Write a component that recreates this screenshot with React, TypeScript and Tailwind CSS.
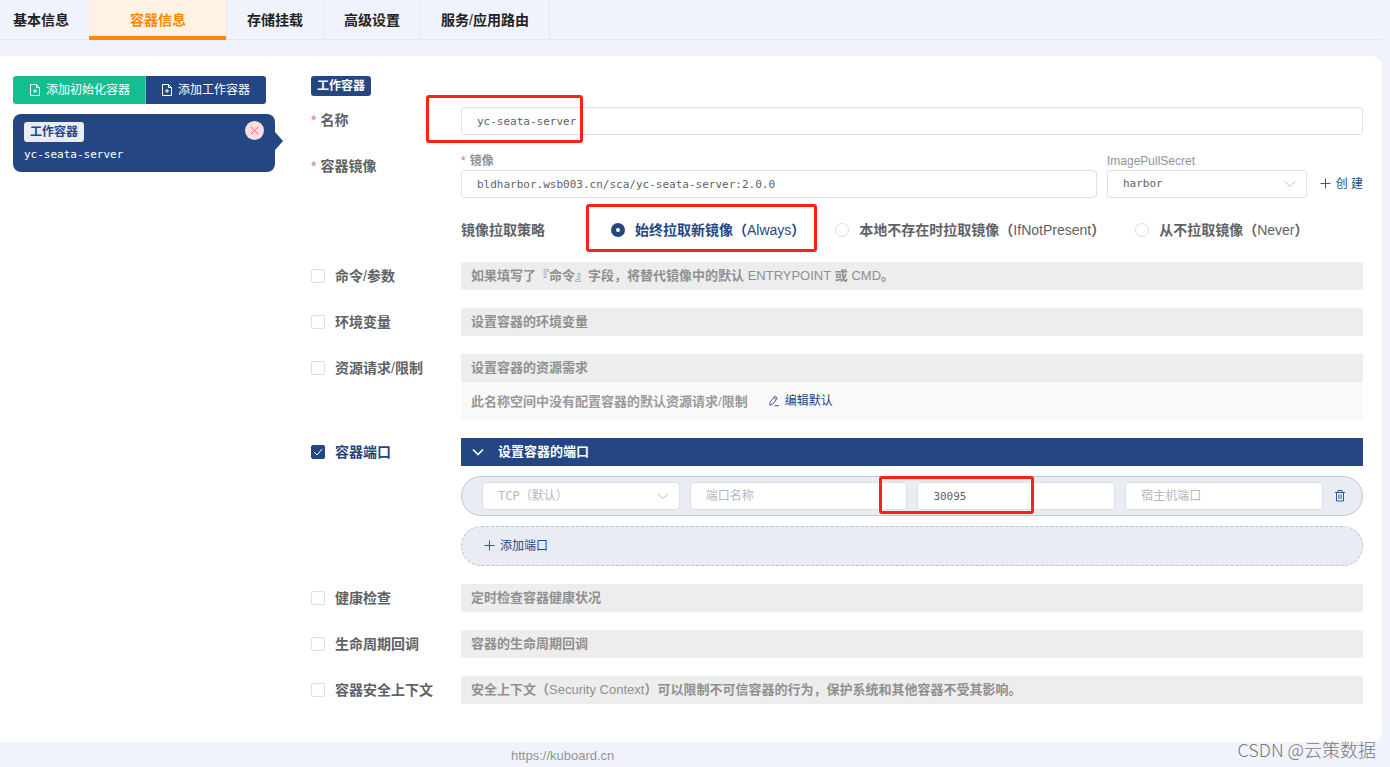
import { useState, type ReactNode } from 'react';
import clsx from 'clsx';

const sans = "font-['Liberation_Sans','Noto_Sans_CJK_SC',sans-serif]";
const mono = "font-['DejaVu_Sans_Mono','Noto_Sans_CJK_SC',monospace]";

const inputClass = `h-7 w-full min-w-0 rounded border border-[#dcdfe6] bg-white px-[15px] text-[11px] text-[#606266] outline-none placeholder:font-['Liberation_Sans','Noto_Sans_CJK_SC',sans-serif] placeholder:text-xs placeholder:text-[#b4b8bf] ${mono}`;

const tabs = ['基本信息', '容器信息', '存储挂载', '高级设置'];

const policies = [
  { value: 'Always', label: '始终拉取新镜像' },
  { value: 'IfNotPresent', label: '本地不存在时拉取镜像' },
  { value: 'Never', label: '从不拉取镜像' },
];

function Thin({ children }: { children: ReactNode }) {
  return <span className="font-normal">{children}</span>;
}

function DocumentAddIcon() {
  return (
    <svg viewBox="0 0 12 12" className="h-3 w-3" fill="none" stroke="currentColor" aria-hidden="true">
      <path d="M1.5.5h6l3 3v8h-9zM7.5.5v3h3M6 5v4M4 7h4" />
    </svg>
  );
}

function PlusIcon() {
  return (
    <svg viewBox="0 0 12 12" className="h-3 w-3" fill="none" stroke="currentColor" strokeWidth="0.9" aria-hidden="true">
      <path d="M5.5 .5v10M.5 5.5h10" />
    </svg>
  );
}

function EditIcon() {
  return (
    <svg viewBox="0 0 12 12" className="h-3 w-3" fill="none" stroke="currentColor" strokeWidth="0.9" strokeLinejoin="round" aria-hidden="true">
      <path d="M2 7.2 6.8 1.2 9.3 3.2 4.6 9.2 1.8 10.2zM5.8 2.6l2.4 2M6.5 10.7h4.5" />
    </svg>
  );
}

function TrashIcon() {
  return (
    <svg viewBox="0 0 12 12" className="h-3 w-3" fill="none" stroke="currentColor" strokeWidth="0.9" aria-hidden="true">
      <path d="M1 2.5h10M4 2.5v-2h4v2M2.5 2.5v8.5h7v-8.5M4.9 4.5v4.5M7.1 4.5v4.5" />
    </svg>
  );
}

function ChevronDown({ className }: { className?: string }) {
  return (
    <svg viewBox="0 0 12 12" className={clsx('h-3 w-3', className)} fill="none" stroke="currentColor" aria-hidden="true">
      <path d="M1 3.5l5 5 5-5" />
    </svg>
  );
}

function Mark({ className }: { className: string }) {
  return <span className={clsx('pointer-events-none absolute z-10 rounded-[3px] border-[3px] border-[#ff2116]', className)} />;
}

function Select({ id, label, options, className }: { id: string; label: string; options: string[]; className?: string }) {
  return (
    <div className="relative">
      <select
        id={id}
        aria-label={label}
        className={clsx('h-7 w-full appearance-none rounded border border-[#dcdfe6] bg-white px-[15px] outline-none', mono, className)}
      >
        {options.map((o) => (
          <option key={o}>{o}</option>
        ))}
      </select>
      <ChevronDown className="pointer-events-none absolute top-2 right-[11px] text-[#b4b8bf]" />
    </div>
  );
}

function RequiredRow({ label, htmlFor, children }: { label: string; htmlFor: string; children: ReactNode }) {
  return (
    <div className="grid grid-cols-[150px_minmax(0,1fr)]">
      <label htmlFor={htmlFor} className="flex h-7 gap-1 text-sm leading-[26px] font-bold text-[#606266]">
        <span className="font-normal text-[#f56c6c]">*</span>
        {label}
      </label>
      {children}
    </div>
  );
}

interface ToggleRowProps {
  id: string;
  label: ReactNode;
  hint: ReactNode;
  defaultChecked?: boolean;
  children?: ReactNode;
}

function ToggleRow({ id, label, hint, defaultChecked = false, children }: ToggleRowProps) {
  const [checked, setChecked] = useState(defaultChecked);

  return (
    <div className="grid grid-cols-[150px_minmax(0,1fr)]">
      <div className="flex h-7 items-center gap-2.5">
        <div className="relative flex h-3.5 w-3.5">
          <input
            id={id}
            type="checkbox"
            checked={checked}
            onChange={(e) => setChecked(e.target.checked)}
            className="peer h-3.5 w-3.5 appearance-none rounded-xs border border-[#dcdfe6] bg-white checked:border-[#244783] checked:bg-[#244783]"
          />
          <svg viewBox="0 0 14 14" className="pointer-events-none absolute inset-0 hidden text-white peer-checked:block" fill="none" stroke="currentColor" aria-hidden="true">
            <path d="M3 7l3 3 5-6" />
          </svg>
        </div>
        <label htmlFor={id} className={clsx('text-sm leading-7 font-bold', checked ? 'text-[#244783]' : 'text-[#606266]')}>
          {label}
        </label>
      </div>
      <div>
        {checked ? (
          <div className="flex h-7 items-center gap-3.5 bg-[#244783] pl-[11px] text-[13px] leading-7 font-bold text-white">
            <ChevronDown className="stroke-[1.6]" />
            {hint}
          </div>
        ) : (
          <div className="h-7 bg-[#ededed] pl-2.5 text-[13px] leading-7 font-bold text-[#909090]">{hint}</div>
        )}
        {children}
      </div>
    </div>
  );
}

export default function App() {
  const [policy, setPolicy] = useState('Always');

  return (
    <div className={`relative min-h-screen bg-[#f0f3fb] ${sans}`}>
      {/* Tabs */}
      <nav className="mr-[7px] flex h-10 border-b border-[#e4e7ed] text-sm font-bold text-[#222222]">
        {tabs.map((tab, i) => (
          <button
            key={tab}
            type="button"
            className={clsx(
              'h-10',
              i === 0 && 'pr-5 pl-[13px]',
              i === 1 && 'border-b-4 border-[#ff8800] bg-[#fff2e4] pt-1 pr-10 pl-[41px] text-[#ff8800]',
              i > 1 && 'border-b border-l border-[#e4e7ed] px-5',
            )}
          >
            {tab}
          </button>
        ))}
        <button type="button" className="h-10 border-x border-b border-[#e4e7ed] px-5">
          服务<Thin>/</Thin>应用路由
        </button>
      </nav>

      <main className="mt-[15px] mr-[7px] flex rounded-r-[10px] border border-l-0 border-[#ebeef5] bg-white pt-5 pr-[19px] pb-[38px] pl-[13px]">
        {/* Container list */}
        <aside className="mr-7 w-[270px] shrink-0">
          <div className="flex text-xs text-white">
            <button type="button" className="flex h-7 items-center gap-[5px] rounded-l-[3px] border-r border-[#8fa5bd] bg-[#13bf91] pr-[15px] pl-4">
              <DocumentAddIcon />
              添加初始化容器
            </button>
            <button type="button" className="flex h-7 items-center gap-[5px] rounded-r-[3px] bg-[#244783] pr-4 pl-[15px]">
              <DocumentAddIcon />
              添加工作容器
            </button>
          </div>
          <div className="relative mt-2.5 mr-2 h-[58px] rounded-lg bg-[#244783] px-[11px] pt-2">
            <span className="block h-5 w-[60px] rounded-[3px] bg-[#e9ecf3] text-center text-xs leading-5 font-bold text-[#244783]">工作容器</span>
            <div className={`mt-1 text-[11px] leading-[18px] text-white ${mono}`}>yc-seata-server</div>
            <button type="button" aria-label="删除" className="absolute top-[7px] right-[11px] flex h-[19px] w-[19px] items-center justify-center rounded-full bg-[#fcdcdc] text-[#f56c6c]">
              <svg viewBox="0 0 9 9" className="h-[9px] w-[9px]" fill="none" stroke="currentColor" aria-hidden="true">
                <path d="M.8.8l7.4 7.4M8.2.8L.8 8.2" />
              </svg>
            </button>
            <svg viewBox="0 0 8 18" className="absolute top-[18px] left-full h-[18px] w-2 text-[#244783]" fill="currentColor" aria-hidden="true">
              <path d="M0 0l8 9-8 9z" />
            </svg>
          </div>
        </aside>

        {/* Container form */}
        <form className="min-w-0 flex-1">
          <span className="block h-5 w-[60px] rounded-[3px] bg-[#244783] text-center text-xs leading-5 font-bold text-white">工作容器</span>

          <div className="mt-[11px] flex flex-col gap-[18px]">
            <RequiredRow label="名称" htmlFor="name">
              <div className="relative">
                <input id="name" className={inputClass} defaultValue="yc-seata-server" />
                <Mark className="-top-3 -left-[35px] h-12 w-[157px]" />
              </div>
            </RequiredRow>

            <RequiredRow label="容器镜像" htmlFor="image">
              <div>
                <div className="flex items-end gap-2.5">
                  <div className="flex-1">
                    <label htmlFor="image" className="flex h-[17px] gap-1 text-xs leading-4 font-bold text-[#909399]">
                      <span className="font-normal text-[#f56c6c]">*</span>
                      镜像
                    </label>
                    <input id="image" className={inputClass} defaultValue="bldharbor.wsb003.cn/sca/yc-seata-server:2.0.0" />
                  </div>
                  <div className="w-[200px]">
                    <label htmlFor="secret" className="block h-[17px] text-xs leading-4 text-[#909399]">
                      ImagePullSecret
                    </label>
                    <Select id="secret" label="ImagePullSecret" options={['harbor']} className="text-[11px] text-[#606266]" />
                  </div>
                  <button type="button" className="flex h-7 w-[46px] items-center justify-end gap-1 text-xs text-[#244783]">
                    <PlusIcon />
                    <span className="whitespace-nowrap">创 建</span>
                  </button>
                </div>

                <div className="mt-[18px] flex h-7 items-center text-sm leading-7 font-bold text-[#606266]">
                  <div className="w-[150px]">镜像拉取策略</div>
                  <div className="relative flex items-center gap-[30px]">
                    {policies.map((p) => (
                      <label key={p.value} className={clsx('flex items-center gap-2.5 whitespace-nowrap', policy === p.value && 'text-[#244783]')}>
                        <input
                          type="radio"
                          name="policy"
                          value={p.value}
                          checked={policy === p.value}
                          onChange={() => setPolicy(p.value)}
                          className="h-3.5 w-3.5 appearance-none rounded-full border border-[#dcdfe6] bg-white checked:border-5 checked:border-[#244783]"
                        />
                        <span>
                          {p.label}（<Thin>{p.value}</Thin>）
                        </span>
                      </label>
                    ))}
                    <Mark className="-top-3 -left-[25px] h-12 w-[231px]" />
                  </div>
                </div>
              </div>
            </RequiredRow>

            <ToggleRow
              id="command"
              label={<>命令<Thin>/</Thin>参数</>}
              hint={<>如果填写了『命令』字段，将替代镜像中的默认 <Thin>ENTRYPOINT</Thin> 或 <Thin>CMD</Thin>。</>}
            />
            <ToggleRow id="env" label="环境变量" hint="设置容器的环境变量" />
            <ToggleRow id="resources" label={<>资源请求<Thin>/</Thin>限制</>} hint="设置容器的资源需求">
              <div className="flex h-[38px] items-center bg-[#f9f9f9] pl-2.5 text-[13px] font-bold text-[#999999]">
                <span>此名称空间中没有配置容器的默认资源请求<Thin>/</Thin>限制</span>
                <button type="button" className="ml-5 flex items-center gap-[5px] text-xs font-normal text-[#244783]">
                  <EditIcon />
                  编辑默认
                </button>
              </div>
            </ToggleRow>

            <ToggleRow id="ports" label="容器端口" hint="设置容器的端口" defaultChecked>
              <div className="mt-2.5 flex h-10 items-center rounded-full border border-[#b9c5da] bg-[#e9ecf3] pl-5">
                <div className="grid flex-1 grid-cols-[10fr_11fr_10fr_10fr] gap-2.5">
                  <Select id="protocol" label="协议" options={['TCP（默认）', 'UDP', 'SCTP']} className="text-xs text-[#b4b8bf]" />
                  <input aria-label="端口名称" className={inputClass} placeholder="端口名称" />
                  <div className="relative">
                    <input aria-label="容器端口" className={inputClass} defaultValue="30095" />
                    <Mark className="-top-1.5 -left-[38px] h-[38px] w-[155px]" />
                  </div>
                  <input aria-label="宿主机端口" className={inputClass} placeholder="宿主机端口" />
                </div>
                <button type="button" aria-label="删除端口" className="flex h-7 w-[39px] items-center justify-center pr-1.5 text-[#244783]">
                  <TrashIcon />
                </button>
              </div>
              <button type="button" className="mt-2.5 flex h-10 w-full items-center gap-1 rounded-full border border-dashed border-[#b9c5da] bg-[#e9ecf3] pl-[22px] text-xs text-[#244783]">
                <PlusIcon />
                添加端口
              </button>
            </ToggleRow>

            <ToggleRow id="health" label="健康检查" hint="定时检查容器健康状况" />
            <ToggleRow id="lifecycle" label="生命周期回调" hint="容器的生命周期回调" />
            <ToggleRow
              id="security"
              label="容器安全上下文"
              hint={<>安全上下文（<Thin>Security Context</Thin>）可以限制不可信容器的行为，保护系统和其他容器不受其影响。</>}
            />
          </div>
        </form>
      </main>

      <footer className="h-6 pl-[511px] text-[13px] leading-[26px] text-[#909399]">
        <a href="https://kuboard.cn">https://kuboard.cn</a>
      </footer>

      <div className="pointer-events-none absolute right-3.5 bottom-1.5 font-['Noto_Sans_CJK_SC',sans-serif] text-lg leading-6 font-light text-[#77797e]">
        CSDN @云策数据
      </div>
    </div>
  );
}
